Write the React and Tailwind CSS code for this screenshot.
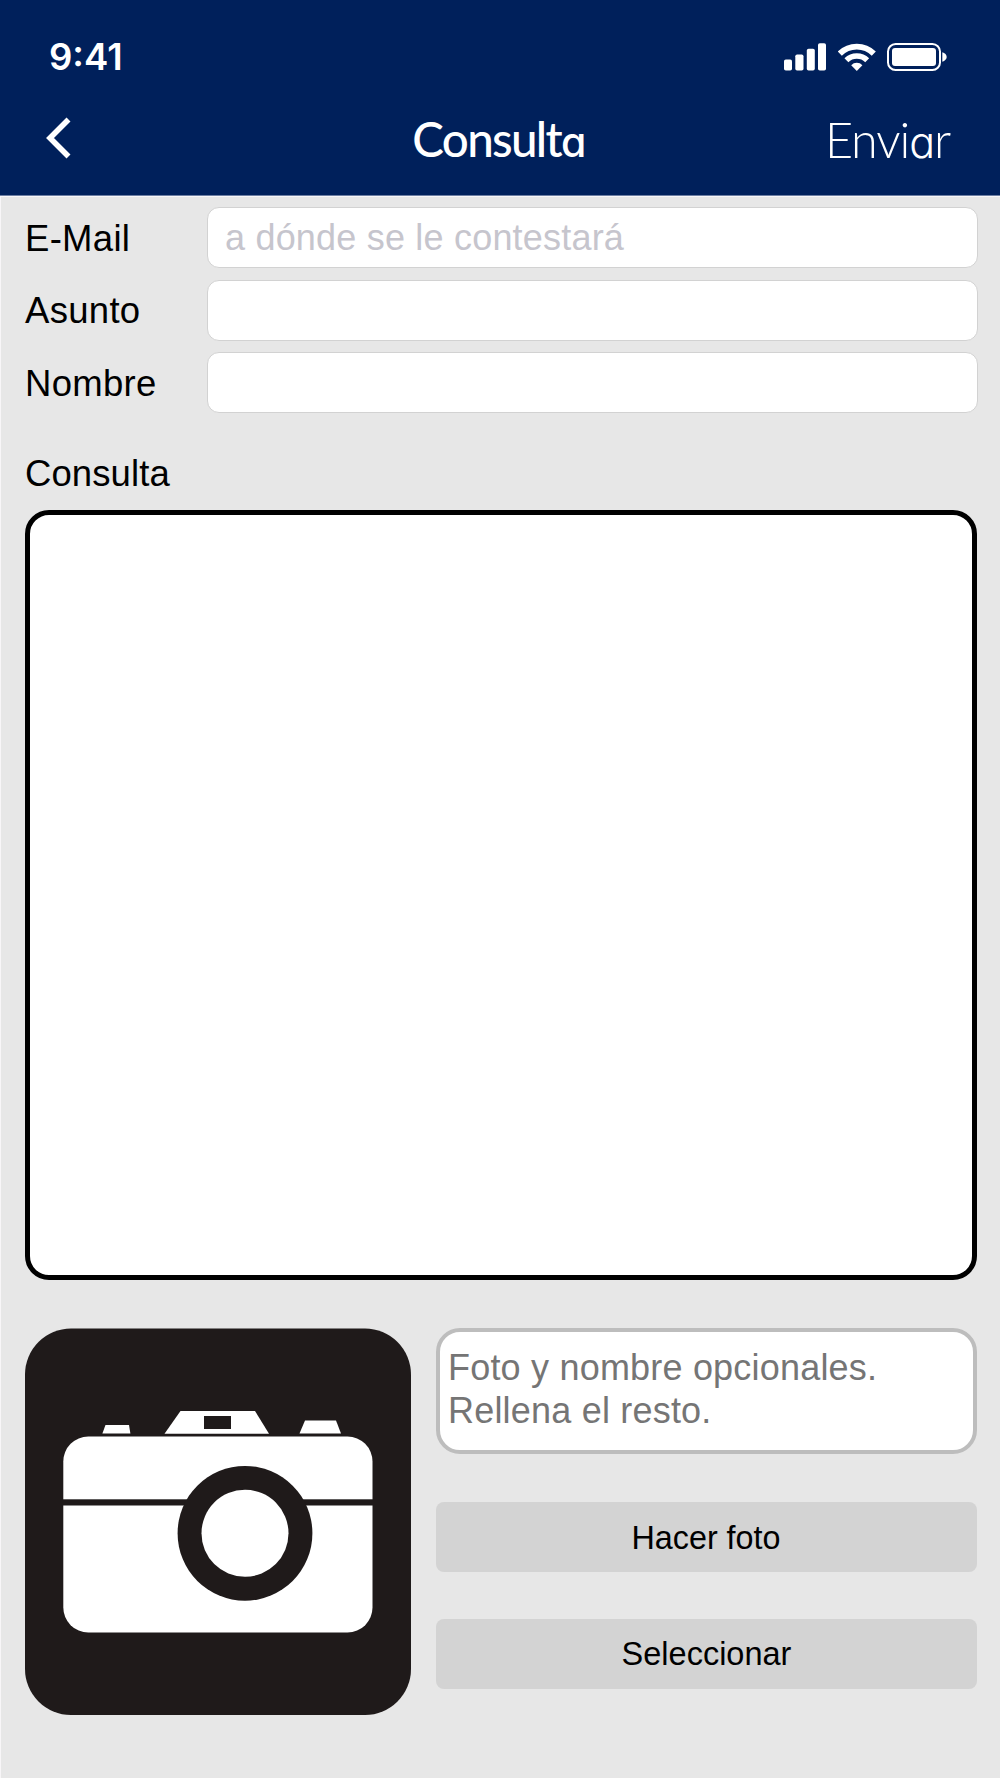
import React, { useState } from "react";

const SignalIcon = () => (
  <svg width="42" height="28" viewBox="784 43.5 42 28" fill="white">
    <rect x="784" y="60" width="8" height="11" rx="1.8" />
    <rect x="795.3" y="55" width="8.2" height="16" rx="1.8" />
    <rect x="806.8" y="49.3" width="8" height="21.7" rx="1.8" />
    <rect x="818" y="43.7" width="8" height="27.3" rx="1.8" />
  </svg>
);

const WifiIcon = () => (
  <svg width="38" height="28" viewBox="838 42 38 28" fill="none" stroke="white">
    <path d="M839.8 52.6a24.2 24.2 0 0 1 34 0" strokeWidth="5.8" />
    <path d="M846.4 59.2a14.9 14.9 0 0 1 20.8 0" strokeWidth="5.6" />
    <path d="M851.2 64.2a7.9 7.9 0 0 1 11.2 0l-5.6 5.7z" fill="white" stroke="none" />
  </svg>
);

const BatteryIcon = () => (
  <svg width="60" height="28" viewBox="887 43 60 28" fill="white">
    <rect x="888" y="44" width="52" height="26" rx="7.6" fill="none" stroke="white" strokeWidth="2" />
    <rect x="892" y="48" width="44" height="18" rx="3" />
    <path d="M942.3 52.3c2.6.8 4.4 2.6 4.4 4.7s-1.8 3.9-4.4 4.7z" />
  </svg>
);

const CameraIcon = () => (
  <svg className="block h-[388px] w-[387px]" viewBox="25 1328 387 388">
    <rect x="25" y="1328.5" width="386" height="386.5" rx="46" fill="#1f1a1a" />
    <g fill="white">
      <path d="M105.5 1425H129l1.4 8.5h-28z" />
      <path d="M180.5 1411H255l14 22.8H164.5z" />
      <path d="M305 1420.5h31l5 13h-41.5z" />
      <rect x="63.3" y="1436.5" width="309.2" height="196" rx="25" />
    </g>
    <g fill="#1f1a1a">
      <rect x="204" y="1416" width="27" height="13" />
      <rect x="63" y="1499.3" width="310" height="6.2" />
      <circle cx="245" cy="1533.3" r="67.4" />
    </g>
    <circle cx="245" cy="1533.3" r="43.5" fill="white" />
  </svg>
);

const Field = ({ label, placeholder, className }) => (
  <label className={`flex h-[61px] items-center ${className}`}>
    <span className="w-[182px] pt-[2px] text-[36.5px] leading-[42px] tracking-[0.3px] text-black">{label}</span>
    <input
      type="text"
      placeholder={placeholder}
      className="h-[61px] w-[771px] rounded-[12px] border border-[#d2d2d2] bg-white px-[17px] pt-[1px] text-[36px] tracking-[0.2px] outline-none placeholder:text-[#c6c5cd]"
    />
  </label>
);

const App = () => {
  const [message, setMessage] = useState("");

  return (
    <div className="h-[1778px] w-[1000px] overflow-hidden bg-[#e7e7e7] font-['Liberation_Sans',Arial,sans-serif]">
      <header className="h-[196px] border-b border-[#6d7fa3] bg-[#00205b] text-white">
        {/* Status bar */}
        <div className="flex h-[100px] items-start justify-between pl-[49px] pr-[53px] pt-[34px]">
          <span className="font-['Inter',sans-serif] text-[36.5px] font-semibold leading-[46px]">9:41</span>
          <div className="flex items-end gap-[11.5px] pt-[9px]">
            <SignalIcon />
            <WifiIcon />
            <BatteryIcon />
          </div>
        </div>

        {/* Navigation */}
        <nav className="grid h-[76px] grid-cols-3 items-center pl-[45px] pr-[49px] font-['Lato',sans-serif]">
          <button type="button" aria-label="Atrás" className="w-[28px]">
            <svg width="28" height="44" viewBox="45 116 28 44" fill="none" stroke="white" strokeWidth="5.6">
              <path d="M68.5 119.5L50 138l18.5 18.5" />
            </svg>
          </button>
          <h1 className="whitespace-nowrap pl-[1px] pt-[2px] text-center text-[47.5px] font-medium leading-[60px] tracking-[-1.7px]">
            Consult
            <span className="font-['Inter',sans-serif] text-[41px] leading-none [font-feature-settings:'cv11']">a</span>
          </h1>
          <button type="button" className="pr-px pt-[2px] text-right text-[48.5px] font-light leading-[60px] tracking-[-1.1px]">
            Envi
            <span className="font-['Inter',sans-serif] text-[43px] leading-none [font-feature-settings:'cv11']">a</span>
            r
          </button>
        </nav>
      </header>

      <main className="h-[1582px] border-l border-t border-[#f8f6f8] pl-[24px] pr-[22px]">
        <Field label="E-Mail" placeholder="a dónde se le contestará" className="mt-[10px]" />
        <Field label="Asunto" className="mt-[11.5px]" />
        <Field label="Nombre" className="mt-[11.5px]" />

        <label htmlFor="consulta" className="mt-[40px] block text-[36.5px] leading-[42px] tracking-[0.1px] text-black">
          Consulta
        </label>
        <textarea
          id="consulta"
          value={message}
          onChange={(e) => setMessage(e.target.value)}
          className="mt-[15px] block h-[770px] w-[952px] resize-none rounded-[24px] border-[5px] border-black bg-white p-3 text-[36px] outline-none"
        />

        {/* Photo */}
        <div className="mt-[48px] flex gap-[24px]">
          <CameraIcon />
          <div className="flex w-[541px] flex-col">
            <p className="h-[126px] rounded-[24px] border-[4px] border-[#bdbdbd] bg-white pl-[8px] pt-[14px] text-[36px] leading-[43px] tracking-[0.2px] text-[#757575]">
              Foto y nombre opcionales.
              <br />
              Rellena el resto.
            </p>
            <button type="button" className="mt-[48px] h-[70px] rounded-[8px] bg-[#d3d3d3] pr-px pt-[2px] text-[32.3px] text-black">
              Hacer foto
            </button>
            <button type="button" className="mt-[47px] h-[70px] rounded-[8px] bg-[#d3d3d3] pt-[1px] text-[32.5px] text-black">
              Seleccionar
            </button>
          </div>
        </div>
      </main>
    </div>
  );
};

export default App;
